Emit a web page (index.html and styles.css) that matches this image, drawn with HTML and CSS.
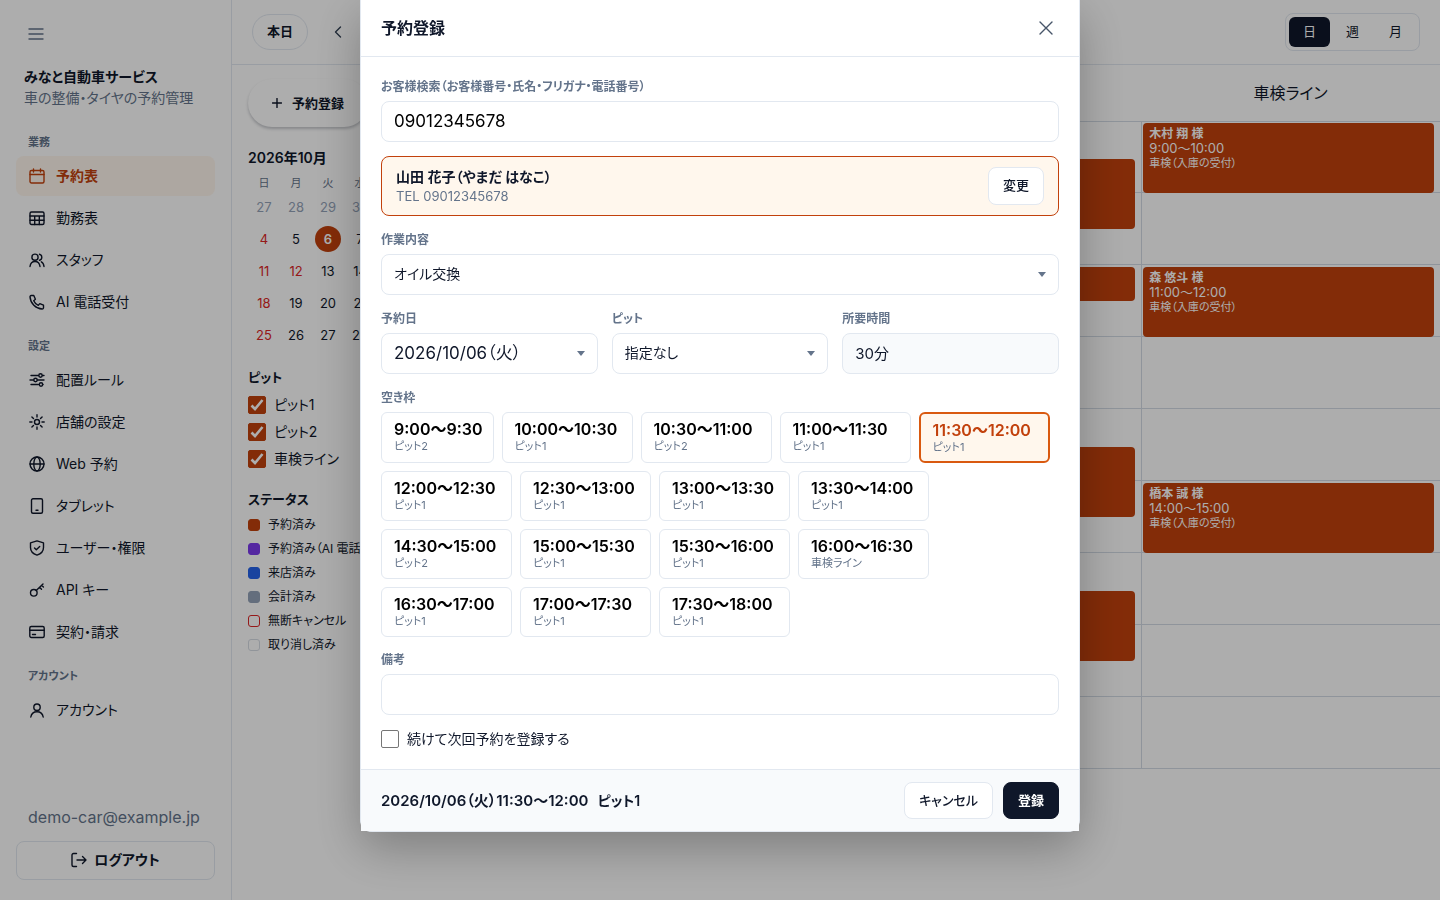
FILE: index.html
```html
<!DOCTYPE html>
<html lang="ja">
<head>
<meta charset="utf-8">
<meta name="viewport" content="width=device-width, initial-scale=1">
<title>予約表</title>
<link rel="stylesheet" href="styles.css">
</head>
<body>
<div class="app">
  <aside class="sidebar">
    <button class="menu-toggle" type="button" aria-label="メニュー">
      <svg width="16" height="16" viewBox="0 0 16 16"><path d="M1 3h14M1 8h14M1 13h14"/></svg>
    </button>
    <div class="brand">
      <div class="brand-name">みなと自動車サービス</div>
      <div class="brand-sub">車の整備・タイヤの予約管理</div>
    </div>
    <nav class="nav">
      <section class="nav-group">
        <h2 class="nav-label">業務</h2>
        <a class="nav-item is-active" href="#"><svg class="icon" viewBox="0 0 16 16"><rect x="1" y="2.500" width="14" height="12.500" rx="1.500"/><path d="M1 6.500h14M4.500 1v3M11.500 1v3"/></svg>予約表</a>
        <a class="nav-item" href="#"><svg class="icon" viewBox="0 0 16 16"><rect x="1" y="2" width="14" height="12.500" rx="1.500"/><path d="M1 6h14M1 10.200h14M5.700 6v8.500M10.300 6v8.500"/></svg>勤務表</a>
        <a class="nav-item" href="#"><svg class="icon" viewBox="0 0 16 16"><circle cx="6" cy="5.200" r="3.100"/><path d="M1 14.500c.4-3.300 2.300-5 5-5s4.600 1.700 5 5M10.500 2.200a3.100 3.100 0 0 1 0 6M12.300 9.800c1.700.8 2.500 2.400 2.700 4.700"/></svg>スタッフ</a>
        <a class="nav-item" href="#"><svg class="icon" viewBox="0 0 16 16"><path d="M2.200 1.500h2.600l1.600 3.700-1.700 1.500a9 9 0 0 0 4.600 4.600l1.500-1.700 3.700 1.600v2.600a1.300 1.300 0 0 1-1.400 1.200C6.800 14.600 1.400 9.200 1 2.900a1.300 1.300 0 0 1 1.200-1.400z"/></svg>AI 電話受付</a>
      </section>
      <section class="nav-group">
        <h2 class="nav-label">設定</h2>
        <a class="nav-item" href="#"><svg class="icon" viewBox="0 0 16 16"><path d="M2 3.500h7.500M13.500 3.500H15M1 8h3.500M8.500 8H15M2 12.500h7.500M13.500 12.500H14"/><circle cx="11.500" cy="3.500" r="1.700"/><circle cx="6.500" cy="8" r="1.700"/><circle cx="12" cy="12.500" r="1.700"/></svg>配置ルール</a>
        <a class="nav-item" href="#"><svg class="icon" viewBox="0 0 16 16"><circle cx="8" cy="8" r="2.500"/><path d="M8 .8v2.200M8 13v2.200M.8 8H3M13 8h2.200M2.900 2.900l1.600 1.600M11.500 11.500l1.600 1.600M2.900 13.100l1.600-1.600M11.500 4.500l1.600-1.600"/></svg>店舗の設定</a>
        <a class="nav-item" href="#"><svg class="icon" viewBox="0 0 16 16"><circle cx="8" cy="8" r="7"/><ellipse cx="8" cy="8" rx="3.200" ry="7"/><path d="M1 8h14"/></svg>Web 予約</a>
        <a class="nav-item" href="#"><svg class="icon" viewBox="0 0 16 16"><rect x="2.500" y="0.800" width="11" height="14.400" rx="1.500"/><path d="M7 12.300h2"/></svg>タブレット</a>
        <a class="nav-item" href="#"><svg class="icon" viewBox="0 0 16 16"><path d="M8 .9l6.500 2v4.600c0 3.700-2.700 6.400-6.500 7.600-3.800-1.200-6.500-3.900-6.500-7.600V2.900z"/><path d="M5.500 8l1.800 1.800 3.400-3.300"/></svg>ユーザー・権限</a>
        <a class="nav-item" href="#"><svg class="icon" viewBox="0 0 16 16"><circle cx="4.800" cy="10.800" r="3.300"/><path d="M7.200 8.400L14 2M10.500 5.300l2 2M12.600 3.300l1.800 1.700"/></svg>API キー</a>
        <a class="nav-item" href="#"><svg class="icon" viewBox="0 0 16 16"><rect x="0.800" y="2.500" width="14.400" height="11" rx="1.500"/><path d="M.8 6.300h14.400M3.500 10.500h3"/></svg>契約・請求</a>
      </section>
      <section class="nav-group">
        <h2 class="nav-label">アカウント</h2>
        <a class="nav-item" href="#"><svg class="icon" viewBox="0 0 16 16"><circle cx="8" cy="5.200" r="3.200"/><path d="M1.800 15c.6-3.500 2.900-5.300 6.200-5.300s5.600 1.800 6.200 5.300"/></svg>アカウント</a>
      </section>
    </nav>
    <div class="account">
      <div class="account-mail">demo-car@example.jp</div>
      <button class="logout" type="button"><svg class="icon" viewBox="0 0 16 16"><path d="M5.500 1.500H2.500A1.500 1.500 0 0 0 1 3v10a1.500 1.500 0 0 0 1.500 1.500h3M6 8h9M11.500 4.500L15 8l-3.500 3.500"/></svg>ログアウト</button>
    </div>
  </aside>

  <div class="workspace">
    <header class="topbar">
      <button class="today" type="button">本日</button>
      <button class="prev" type="button" aria-label="前の日"><svg width="16" height="16" viewBox="0 0 16 16"><path d="M10.500 3L5.500 8l5 5"/></svg></button>
      <div class="view-switch">
        <button class="view is-on" type="button">日</button>
        <button class="view" type="button">週</button>
        <button class="view" type="button">月</button>
      </div>
    </header>
    <div class="board">
      <aside class="filters">
        <button class="create" type="button"><svg width="10" height="10" viewBox="0 0 10 10"><path d="M5 .5v9M.5 5h9"/></svg>予約登録</button>
        <table class="month">
          <caption>2026年10月</caption>
          <thead><tr><th>日</th><th>月</th><th>火</th><th>水</th></tr></thead>
          <tbody>
            <tr class="is-out"><td>27</td><td>28</td><td>29</td><td>30</td></tr>
            <tr><td class="is-holiday">4</td><td>5</td><td><span class="selected-day">6</span></td><td>7</td></tr>
            <tr><td class="is-holiday">11</td><td class="is-holiday">12</td><td>13</td><td>14</td></tr>
            <tr><td class="is-holiday">18</td><td>19</td><td>20</td><td>21</td></tr>
            <tr><td class="is-holiday">25</td><td>26</td><td>27</td><td>28</td></tr>
          </tbody>
        </table>
        <h3 class="filter-title">ピット</h3>
        <div class="bays">
          <label class="bay"><input class="tick" type="checkbox" checked>ピット1</label>
          <label class="bay"><input class="tick" type="checkbox" checked>ピット2</label>
          <label class="bay"><input class="tick" type="checkbox" checked>車検ライン</label>
        </div>
        <h3 class="filter-title">ステータス</h3>
        <ul class="legend">
          <li><span class="swatch booked"></span>予約済み</li>
          <li><span class="swatch booked-ai"></span>予約済み（AI 電話）</li>
          <li><span class="swatch arrived"></span>来店済み</li>
          <li><span class="swatch paid"></span>会計済み</li>
          <li><span class="swatch noshow"></span>無断キャンセル</li>
          <li><span class="swatch cancelled"></span>取り消し済み</li>
        </ul>
      </aside>
      <main class="schedule">
        <div class="lane-head"></div><div class="lane-head"></div><div class="lane-head"></div>
        <div class="lane-head">車検ライン</div>
        <div class="lane hours"></div>
        <div class="lane"></div>
        <div class="lane">
          <article class="event" style="grid-row: 2 / span 2"></article>
          <article class="event" style="grid-row: 5 / span 1"></article>
          <article class="event" style="grid-row: 10 / span 2"></article>
          <article class="event" style="grid-row: 14 / span 2"></article>
        </div>
        <div class="lane">
          <article class="event" style="grid-row: 1 / span 2"><strong>木村 翔 様</strong><span class="event-time">9:00〜10:00</span><span>車検（入庫の受付）</span></article>
          <article class="event" style="grid-row: 5 / span 2"><strong>森 悠斗 様</strong><span class="event-time">11:00〜12:00</span><span>車検（入庫の受付）</span></article>
          <article class="event" style="grid-row: 11 / span 2"><strong>橋本 誠 様</strong><span class="event-time">14:00〜15:00</span><span>車検（入庫の受付）</span></article>
        </div>
      </main>
    </div>
  </div>
</div>

<div class="overlay">
  <form class="dialog" role="dialog" aria-labelledby="dialog-title">
    <header class="dialog-head">
      <h1 class="dialog-title" id="dialog-title">予約登録</h1>
      <button class="close" type="button" aria-label="閉じる"><svg width="14" height="14" viewBox="0 0 14 14"><path d="M1 1l12 12M13 1L1 13"/></svg></button>
    </header>
    <div class="dialog-body">
      <div class="field">
        <label class="field-label" for="search">お客様検索（お客様番号・氏名・フリガナ・電話番号）</label>
        <input class="control numeric typed" id="search" type="text" value="09012345678">
      </div>
      <div class="customer">
        <div>
          <div class="customer-name">山田 花子（やまだ はなこ）</div>
          <div class="customer-tel">TEL 09012345678</div>
        </div>
        <button class="button" type="button">変更</button>
      </div>
      <div class="field">
        <label class="field-label" for="work">作業内容</label>
        <select class="control picker" id="work"><option>オイル交換</option></select>
      </div>
      <div class="columns">
        <div class="field">
          <label class="field-label" for="date">予約日</label>
          <select class="control picker numeric" id="date"><option>2026/10/06（火）</option></select>
        </div>
        <div class="field">
          <label class="field-label" for="bay">ピット</label>
          <select class="control picker" id="bay"><option>指定なし</option></select>
        </div>
        <div class="field">
          <label class="field-label" for="duration">所要時間</label>
          <input class="control readonly" id="duration" type="text" value="30分" readonly>
        </div>
      </div>
      <div class="field">
        <div class="field-label" id="slots-label">空き枠</div>
        <div class="slots" role="group" aria-labelledby="slots-label">
          <button class="slot is-short" type="button"><b>9:00〜9:30</b><small>ピット2</small></button>
          <button class="slot" type="button"><b>10:00〜10:30</b><small>ピット1</small></button>
          <button class="slot" type="button"><b>10:30〜11:00</b><small>ピット2</small></button>
          <button class="slot" type="button"><b>11:00〜11:30</b><small>ピット1</small></button>
          <button class="slot is-selected" type="button"><b>11:30〜12:00</b><small>ピット1</small></button>
          <button class="slot" type="button"><b>12:00〜12:30</b><small>ピット1</small></button>
          <button class="slot" type="button"><b>12:30〜13:00</b><small>ピット1</small></button>
          <button class="slot" type="button"><b>13:00〜13:30</b><small>ピット1</small></button>
          <button class="slot" type="button"><b>13:30〜14:00</b><small>ピット1</small></button>
          <button class="slot" type="button"><b>14:30〜15:00</b><small>ピット2</small></button>
          <button class="slot" type="button"><b>15:00〜15:30</b><small>ピット1</small></button>
          <button class="slot" type="button"><b>15:30〜16:00</b><small>ピット1</small></button>
          <button class="slot" type="button"><b>16:00〜16:30</b><small>車検ライン</small></button>
          <button class="slot" type="button"><b>16:30〜17:00</b><small>ピット1</small></button>
          <button class="slot" type="button"><b>17:00〜17:30</b><small>ピット1</small></button>
          <button class="slot" type="button"><b>17:30〜18:00</b><small>ピット1</small></button>
        </div>
      </div>
      <div class="field">
        <label class="field-label" for="memo">備考</label>
        <input class="control" id="memo" type="text">
      </div>
      <label class="again"><input class="tick" type="checkbox">続けて次回予約を登録する</label>
    </div>
    <footer class="dialog-foot">
      <div class="summary"><span>2026/10/06（火）11:30〜12:00</span><span class="summary-bay">ピット1</span></div>
      <button class="button" type="button">キャンセル</button>
      <button class="button primary" type="submit">登録</button>
    </footer>
  </form>
</div>
</body>
</html>
```
FILE: styles.css
```css
:root {
  --ink: #0f172a;
  --muted: #64748b;
  --line: #e2e8f0;
  --accent: #c2410c;
  --tint: #fff7ed;
}

* { box-sizing: border-box; }

body {
  margin: 0;
  background: #fff;
  color: var(--ink);
  font-family: Inter, "Noto Sans CJK JP", sans-serif;
  font-size: 14px;
  line-height: 20px;
  font-feature-settings: "palt";
}

button, input, select {
  font: inherit;
  font-feature-settings: inherit;
  color: inherit;
}

button {
  padding: 0 0 2px;
  border: 0;
  background: none;
  white-space: nowrap;
}

h1, h2, h3, ul { margin: 0; padding: 0; }

svg {
  flex: none;
  fill: none;
  stroke: currentColor;
  stroke-width: 1.4;
  stroke-linecap: round;
  stroke-linejoin: round;
}

.icon { width: 16px; height: 16px; }

.app {
  display: flex;
  min-height: 100vh;
}

/* Sidebar */
.sidebar {
  display: flex;
  flex-direction: column;
  flex: none;
  width: 232px;
  padding: 26px 16px 20px;
  border-right: 1px solid var(--line);
}

.menu-toggle {
  display: flex;
  align-self: flex-start;
  margin-left: 12px;
  padding: 0;
  color: var(--muted);
}

.brand {
  margin: 24px 8px 26px;
  line-height: 21px;
}

.brand-name { font-weight: 600; }
.brand-sub { color: var(--muted); }

.nav {
  display: flex;
  flex-direction: column;
  gap: 16px;
}

.nav-group {
  display: flex;
  flex-direction: column;
  gap: 2px;
}

.nav-label {
  margin: 0 12px 4px;
  color: var(--muted);
  font-size: 11px;
  font-weight: 600;
  line-height: 16px;
}

.nav-item {
  display: flex;
  align-items: center;
  gap: 11px;
  height: 40px;
  padding: 0 13px;
  border-radius: 8px;
  color: inherit;
  text-decoration: none;
}

.nav-item.is-active {
  background: var(--tint);
  color: var(--accent);
  font-weight: 600;
}

.account { margin-top: auto; }

.account-mail {
  margin: 0 12px 12px;
  color: var(--muted);
  font-size: 16px;
  line-height: 24px;
}

.logout {
  display: flex;
  align-items: center;
  justify-content: center;
  gap: 7px;
  width: 100%;
  height: 39px;
  border: 1px solid var(--line);
  border-radius: 8px;
  font-weight: 600;
}

/* Top bar */
.workspace {
  display: flex;
  flex: 1;
  flex-direction: column;
  min-width: 0;
}

.topbar {
  display: flex;
  align-items: center;
  height: 65px;
  padding: 0 20px;
  border-bottom: 1px solid var(--line);
}

.today {
  height: 36px;
  padding: 0 14px 2px;
  border: 1px solid var(--line);
  border-radius: 18px;
  font-size: 13px;
  font-weight: 600;
}

.prev {
  display: flex;
  margin-left: 22px;
  padding: 0;
  color: #334155;
}

.view-switch {
  display: flex;
  gap: 2px;
  margin-left: auto;
  padding: 3px;
  border: 1px solid var(--line);
  border-radius: 8px;
}

.view {
  width: 41px;
  height: 30px;
  border-radius: 6px;
  font-size: 13px;
}

.view.is-on {
  background: var(--ink);
  color: #fff;
}

/* Filters */
.board {
  display: flex;
  flex: 1;
}

.filters {
  flex: none;
  width: 256px;
  padding: 14px 16px;
}

.create {
  display: flex;
  align-items: center;
  gap: 10px;
  height: 48px;
  padding: 0 24px;
  border-radius: 24px;
  box-shadow: 0 2px 3px rgba(15, 23, 42, .24);
  font-size: 13px;
  font-weight: 600;
}

.month {
  width: 128px;
  margin-top: 20px;
  border-collapse: collapse;
  table-layout: fixed;
  font-size: 13px;
  text-align: center;
}

.month caption {
  padding-bottom: 5px;
  font-size: 14px;
  font-weight: 600;
  line-height: 22px;
  text-align: left;
}

.month th {
  height: 17px;
  padding: 0;
  color: var(--muted);
  font-size: 11px;
  font-weight: 400;
  line-height: 16px;
}

.month td {
  height: 32px;
  padding: 0;
}

.month .is-out { color: #94a3b8; }
.month .is-holiday { color: #dc2626; }

.selected-day {
  display: block;
  width: 26px;
  margin: 0 auto;
  border-radius: 50%;
  background: var(--accent);
  color: #fff;
  font-weight: 600;
  line-height: 26px;
}

.filter-title {
  margin: 16px 0 8px;
  font-size: 13px;
  font-weight: 600;
  line-height: 20px;
}

.bays {
  display: flex;
  flex-direction: column;
  gap: 7px;
  margin-bottom: 20px;
}

.bay, .again {
  display: flex;
  align-items: center;
  gap: 8px;
}

.bays + .filter-title { margin-bottom: 7px; }

.tick {
  appearance: none;
  flex: none;
  width: 18px;
  height: 18px;
  margin: 0;
  border: 1px solid #767676;
  border-radius: 2px;
  background: #fff;
}

.tick:checked {
  border-color: var(--accent);
  background: var(--accent) url("data:image/svg+xml,%3Csvg xmlns='http://www.w3.org/2000/svg' viewBox='0 0 16 16'%3E%3Cpath d='M2.500 8.500l3.500 3.500L13.500 3' fill='none' stroke='white' stroke-width='2.600'/%3E%3C/svg%3E") center / 16px no-repeat;
}

.legend {
  display: flex;
  flex-direction: column;
  gap: 6px;
  font-size: 12px;
  line-height: 18px;
  list-style: none;
}

.legend li {
  display: flex;
  align-items: center;
  gap: 8px;
  white-space: nowrap;
}

.swatch {
  width: 12px;
  height: 12px;
  border: 1px solid transparent;
  border-radius: 3px;
}

.swatch.booked { border-color: var(--accent); background: var(--accent); }
.swatch.booked-ai { border-color: #7c3aed; background: #7c3aed; }
.swatch.arrived { border-color: #2563eb; background: #2563eb; }
.swatch.paid { border-color: #94a3b8; background: #94a3b8; }
.swatch.noshow { border-color: #dc2626; }
.swatch.cancelled { border-color: #d6dce4; }

/* Schedule */
.schedule {
  display: grid;
  flex: 1;
  grid-template-columns: 56px repeat(3, 1fr);
  align-content: start;
}

.lane-head {
  height: 57px;
  border-bottom: 1px solid #d3dbe5;
  font-size: 16px;
  line-height: 56px;
  text-align: center;
}

.lane {
  display: grid;
  grid-template-rows: repeat(18, 36px);
  margin-top: -1px;
  border-left: 1px solid #d3dbe5;
  background: repeating-linear-gradient(transparent 0 71px, #d3dbe5 71px 72px);
}

.lane.hours { border-left: 0; }

.event {
  display: flex;
  flex-direction: column;
  margin: 2px 6px 0 1px;
  padding: 3px 6px;
  border-radius: 4px;
  background: var(--accent);
  color: #fff;
  font-size: 11px;
  line-height: 14px;
}

.event strong { font-size: 12px; font-weight: 600; line-height: 15px; }
.event-time { font-size: 13px; line-height: 15px; }

/* Dialog */
.overlay {
  position: fixed;
  inset: 0;
  display: flex;
  align-items: flex-start;
  justify-content: center;
  overflow: auto;
  background: rgba(0, 0, 0, .32);
}

.dialog {
  width: 720px;
  border: solid var(--line);
  border-width: 0 1px 1px;
  border-radius: 0 0 12px 12px;
  background: #fff;
  box-shadow: 0 16px 48px rgba(0, 0, 0, .28);
}

.dialog-head {
  display: flex;
  align-items: center;
  justify-content: space-between;
  height: 57px;
  padding: 0 26px 0 20px;
  border-bottom: 1px solid var(--line);
}

.dialog-title {
  font-size: 16px;
  font-weight: 700;
}

.close {
  display: flex;
  padding: 0;
  color: #475569;
}

.dialog-body {
  display: flex;
  flex-direction: column;
  gap: 14px;
  padding: 21px 20px 20px;
}

.field {
  display: flex;
  flex-direction: column;
  gap: 5px;
  min-width: 0;
}

.field-label {
  color: var(--muted);
  font-size: 12px;
  font-weight: 600;
  line-height: 18px;
}

.control {
  width: 100%;
  height: 41px;
  padding: 0 12px 2px;
  border: 1px solid var(--line);
  border-radius: 8px;
  background-color: #fff;
}

.numeric { font-size: 17px; }
.typed { color: #000; }

.readonly {
  background-color: #f8fafc;
  font-size: 15px;
}

.picker {
  appearance: none;
  background-image: url("data:image/svg+xml,%3Csvg xmlns='http://www.w3.org/2000/svg' viewBox='0 0 8 5'%3E%3Cpath d='M0 0h8L4 5z' fill='%2364748b'/%3E%3C/svg%3E");
  background-position: right 12px center;
  background-size: 8px 5px;
  background-repeat: no-repeat;
}

.customer {
  display: flex;
  align-items: center;
  justify-content: space-between;
  margin-bottom: 1px;
  padding: 10px 14px;
  border: 1px solid var(--accent);
  border-radius: 8px;
  background: var(--tint);
}

.customer-name { font-weight: 600; }

.customer-tel {
  color: var(--muted);
  font-size: 13px;
  line-height: 18px;
}

.button {
  height: 38px;
  padding: 0 14px 2px;
  border: 1px solid var(--line);
  border-radius: 8px;
  background: #fff;
  font-size: 13px;
  font-weight: 500;
}

.columns {
  display: grid;
  grid-template-columns: repeat(3, 1fr);
  gap: 14px;
  margin: 1px 0;
}

.slots {
  display: flex;
  flex-wrap: wrap;
  gap: 8px;
}

.slot {
  display: flex;
  flex-direction: column;
  align-items: flex-start;
  min-width: 131px;
  padding: 6px 12px 7px;
  border: 1px solid var(--line);
  border-radius: 6px;
  background: #fff;
  color: #000;
}

.slot.is-short {
  min-width: 0;
  padding-right: 10px;
}

.slot b {
  font-size: 16px;
  font-weight: 600;
  line-height: 20px;
}

.slot small {
  color: var(--muted);
  font-size: 11px;
  line-height: 15px;
}

.slot.is-selected {
  padding-bottom: 6px;
  border: 2px solid #d9590f;
  background: var(--tint);
}

.slot.is-selected b { color: var(--accent); }

.dialog-foot {
  display: flex;
  align-items: center;
  gap: 10px;
  padding: 12px 20px;
  border-top: 1px solid var(--line);
  background: #f8fafc;
}

.dialog-foot .button { height: 37px; }

.summary {
  display: flex;
  gap: 9px;
  margin-right: auto;
  font-size: 15px;
  font-weight: 600;
}

.summary-bay { font-size: 14px; }

.button.primary {
  border-color: var(--ink);
  background: var(--ink);
  color: #fff;
  font-weight: 700;
}
```
